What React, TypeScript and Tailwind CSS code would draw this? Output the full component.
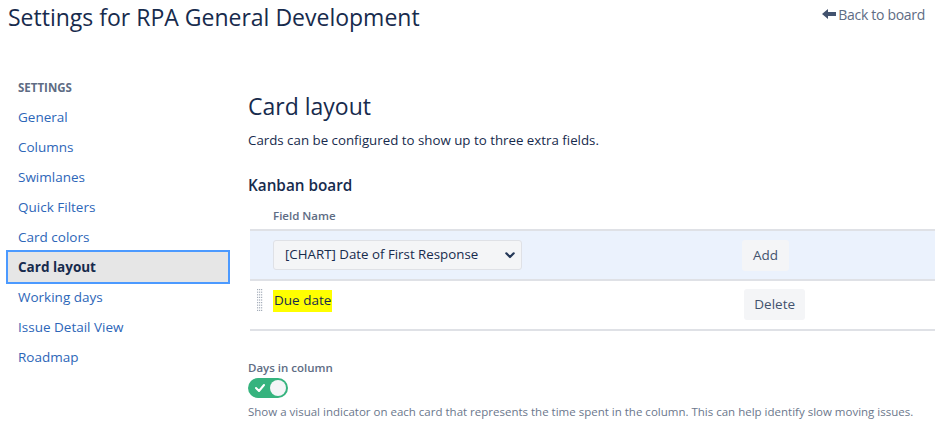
import React from "react";

const font = { fontFamily: '"Segoe UI", "Open Sans", "Noto Sans", sans-serif' };

function BackArrow() {
  return (
    <svg width="14" height="10" viewBox="0 0 14 10" className="mr-[2px]">
      <path d="M0 5 L6 0 L6 3 L14 3 L14 7 L6 7 L6 10 Z" fill="#42526e" />
    </svg>
  );
}

function DragHandle() {
  const dots: React.ReactElement[] = [];
  for (let r = 0; r < 9; r++) {
    for (let c = 0; c < 3; c++) {
      dots.push(<rect key={`${r}-${c}`} x={c * 2} y={r * 2.6} width="1.2" height="1.2" fill="#a5adba" />);
    }
  }
  return (
    <svg width="6" height="24" viewBox="0 0 6 24">
      {dots}
    </svg>
  );
}

function Chevron() {
  return (
    <svg width="10" height="7" viewBox="0 0 10 7">
      <path d="M1.3 1.3 L5 5 L8.7 1.3" stroke="#253858" strokeWidth="2.2" fill="none" strokeLinecap="round" strokeLinejoin="round" />
    </svg>
  );
}

const items = [
  "General",
  "Columns",
  "Swimlanes",
  "Quick Filters",
  "Card colors",
  "Card layout",
  "Working days",
  "Issue Detail View",
  "Roadmap",
];

export default function App() {
  return (
    <div className="w-[944px] h-[436px] bg-white overflow-hidden text-[#172b4d]" style={font}>
      <div className="flex justify-between h-[34px]">
        <h1 className="pl-[8px] text-[23px] leading-[34px] font-normal text-[#172b4d]">
          Settings for RPA General Development
        </h1>
        <a className="flex items-center h-[28px] pr-[19px] text-[14px] tracking-[-0.3px] text-[#5e6c84]">
          <BackArrow />
          Back to board
        </a>
      </div>
      <div className="flex">
        <div className="w-[220px] ml-[8px] pt-[40px] shrink-0">
          <div className="h-[28px] leading-[28px] px-[10px] text-[11.5px] font-bold text-[#5e6c84]">SETTINGS</div>
          {items.map((it) =>
            it === "Card layout" ? (
              <div
                key={it}
                className="h-[30px] leading-[30px] px-[10px] text-[13.5px] font-bold text-[#172b4d] bg-[#e6e6e6] outline-2 outline-[#4c9aff]"
              >
                {it}
              </div>
            ) : (
              <div key={it} className="h-[30px] leading-[30px] px-[10px] text-[13.5px] text-[#2d66b8]">
                {it}
              </div>
            )
          )}
        </div>
        <div className="ml-[20px] flex-1 pr-[9px] pt-[57px]">
          <h2 className="text-[23px] leading-[30px] font-medium text-[#172b4d]">Card layout</h2>
          <p className="mt-[9px] text-[13.3px] leading-[20px] text-[#172b4d]">
            Cards can be configured to show up to three extra fields.
          </p>
          <h3 className="mt-[25px] text-[15.3px] leading-[20px] font-semibold text-[#172b4d]">Kanban board</h3>
          <div className="mt-[13px] pl-[25px] text-[11.5px] leading-[16px] font-semibold text-[#5e6c84]">Field Name</div>
          <div className="mt-[5px] ml-[2px] border-t-2 border-[#dfe1e6]">
            <div className="h-[50px] bg-[#ebf2fd] flex items-center border-b-2 border-[#dfe1e6]">
              <div className="ml-[23px] w-[249px] h-[30px] bg-[#f4f5f7] border border-[#dfe1e6] rounded-[3px] flex items-center justify-between pl-[11px] pr-[6px] text-[13.3px] text-[#172b4d]">
                <span>[CHART] Date of First Response</span>
                <Chevron />
              </div>
              <div className="ml-[220px] h-[31px] px-[11px] flex items-center rounded-[3px] bg-[#f4f5f7] text-[13.5px] text-[#42526e]">
                Add
              </div>
            </div>
            <div className="h-[50px] flex items-start border-b-2 border-[#dfe1e6]">
              <div className="ml-[7px] mt-[8px]">
                <DragHandle />
              </div>
              <div className="ml-[10px] mt-[9px] h-[22px] px-[1px] bg-[#ffff00] text-[13.5px] leading-[20px] text-[#172b4d]">
                Due date
              </div>
              <div className="ml-[412px] mt-[8px] h-[31px] px-[10px] flex items-center rounded-[3px] bg-[#f4f5f7] text-[13.5px] text-[#42526e]">
                Delete
              </div>
            </div>
          </div>
          <div className="mt-[29px] text-[11.5px] leading-[16px] font-semibold text-[#5e6c84]">Days in column</div>
          <div className="mt-[2px] w-[40px] h-[20px] rounded-full bg-[#36b37e] relative flex items-center">
            <svg width="10" height="8" viewBox="0 0 10 8" className="ml-[7px]">
              <path d="M1 4 L4 7 L9 1" stroke="white" strokeWidth="2" fill="none" strokeLinecap="round" strokeLinejoin="round" />
            </svg>
            <div className="absolute right-[2px] top-[2px] w-[16px] h-[16px] rounded-full bg-[#f4f5f7]" />
          </div>
          <p className="mt-[6px] text-[11.5px] leading-[16px] whitespace-nowrap text-[#6b778c]">
            Show a visual indicator on each card that represents the time spent in the column. This can help identify slow moving issues.
          </p>
        </div>
      </div>
    </div>
  );
}
